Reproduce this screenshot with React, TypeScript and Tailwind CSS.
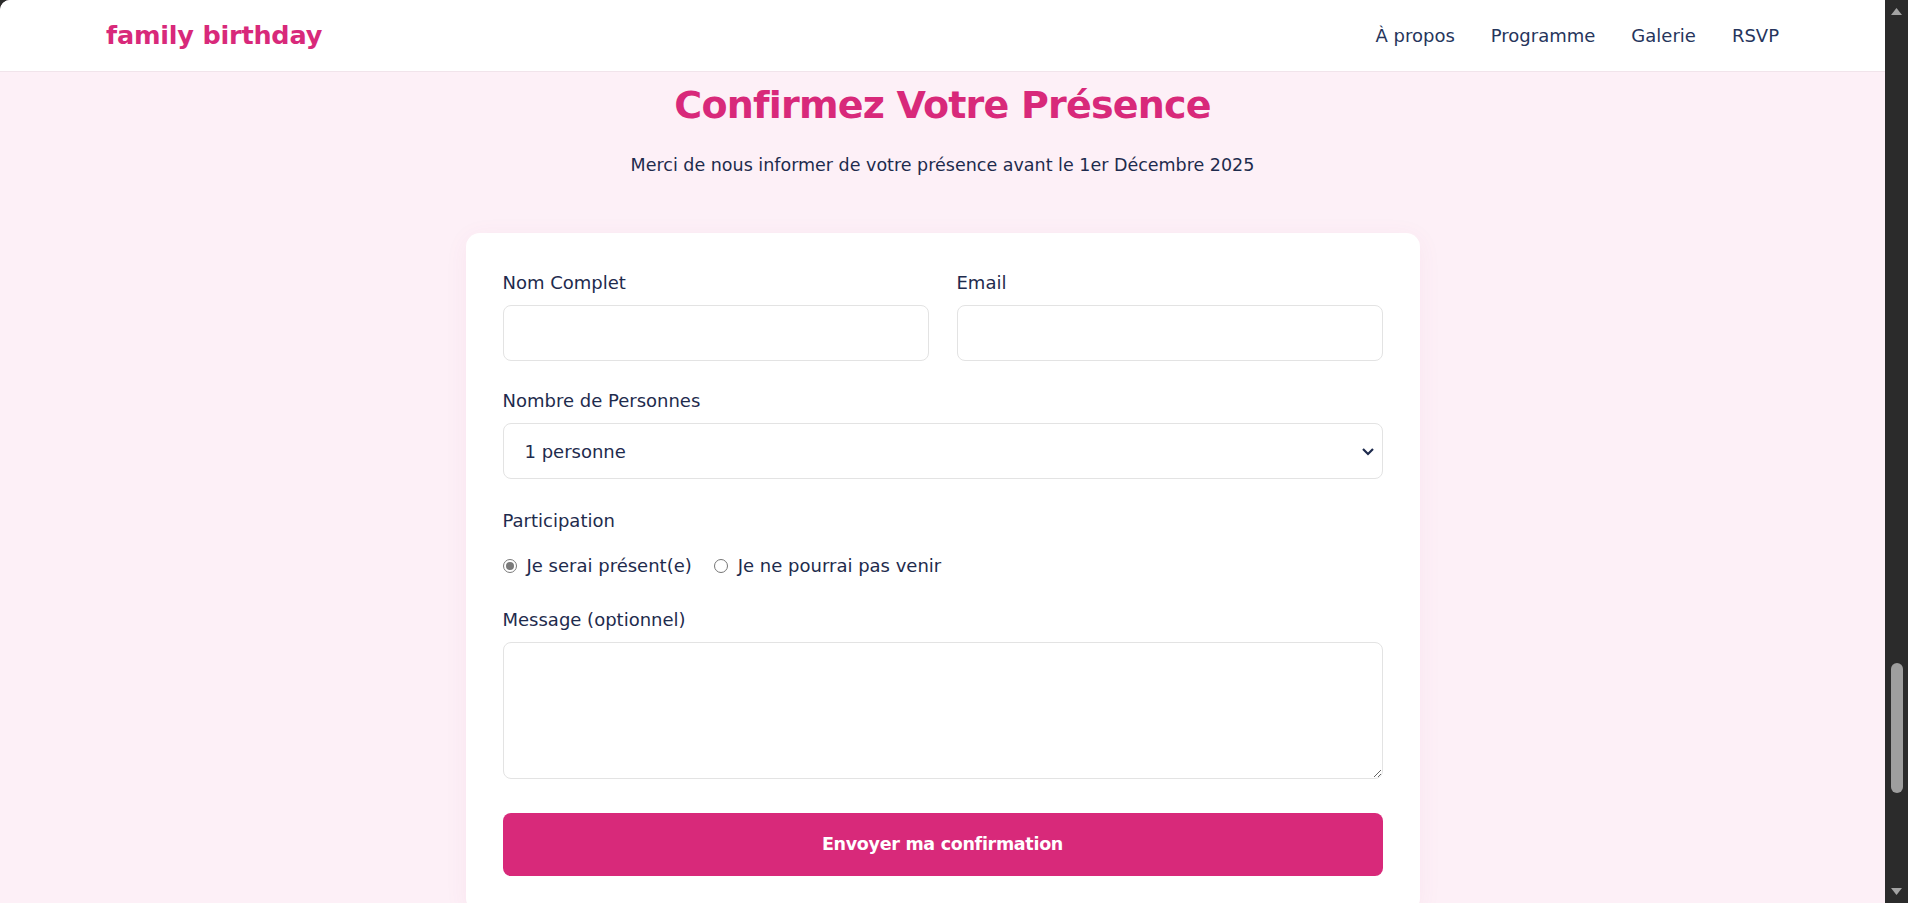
import React from "react";

const font = { fontFamily: '"DejaVu Sans", "Noto Sans", sans-serif' };

function Label({ children }: { children: React.ReactNode }) {
  return <div className="text-[18px] leading-6 text-[#1e2b4d] mb-[10px]">{children}</div>;
}

function Radio({ checked, label }: { checked: boolean; label: string }) {
  return (
    <label className="flex items-center">
      {checked ? (
        <span className="w-[14px] h-[14px] rounded-full border-[1.5px] border-[#7a7a7a] flex items-center justify-center">
          <span className="w-[8px] h-[8px] rounded-full bg-[#7a7a7a]" />
        </span>
      ) : (
        <span className="w-[14px] h-[14px] rounded-full border border-[#767676] bg-white" />
      )}
      <span className="ml-[10px] text-[18px] leading-6 text-[#1e2b4d]">{label}</span>
    </label>
  );
}

export default function App() {
  return (
    <div className="w-full h-[903px] overflow-hidden flex bg-[#2b2b2b]" style={font}>
      <div className="flex-1 flex flex-col bg-[#fdf0f7] rounded-tl-[10px] overflow-hidden">
        <header className="h-[72px] shrink-0 bg-white border-b border-[#f1e4eb] flex items-center justify-between px-[106px]">
          <div className="text-[25.5px] font-bold text-[#d8297a] tracking-[-0.2px]">family birthday</div>
          <nav className="flex items-center gap-9 text-[18px] text-[#26355c]">
            <a>À propos</a>
            <a>Programme</a>
            <a>Galerie</a>
            <a>RSVP</a>
          </nav>
        </header>
        <main className="flex-1 flex flex-col items-center pt-[11px]">
          <h1 className="text-[38px] leading-[44px] font-bold text-[#d8297a] tracking-[-0.8px]">
            Confirmez Votre Présence
          </h1>
          <p className="mt-[25px] text-[17.5px] leading-[26px] text-[#1e2b4d]">
            Merci de nous informer de votre présence avant le 1er Décembre 2025
          </p>
          <div className="mt-[55px] w-[954px] bg-white rounded-[14px] shadow-[0_4px_24px_rgba(180,60,120,0.06)] px-[37px] pt-[38px] pb-[36px]">
            <div className="grid grid-cols-2 gap-x-[28px]">
              <div>
                <Label>Nom Complet</Label>
                <input className="w-full h-[56px] rounded-[8px] border border-[#e3e3e3] bg-white outline-none px-4" />
              </div>
              <div>
                <Label>Email</Label>
                <input className="w-full h-[56px] rounded-[8px] border border-[#e3e3e3] bg-white outline-none px-4" />
              </div>
            </div>
            <div className="mt-[28px]">
              <Label>Nombre de Personnes</Label>
              <div className="h-[56px] rounded-[8px] border border-[#e3e3e3] bg-white flex items-center justify-between pl-[21px] pr-[6px]">
                <span className="text-[18px] text-[#1e2b4d]">1 personne</span>
                <svg width="14" height="9" viewBox="0 0 14 9" className="mr-[1px]">
                  <polyline points="2,2 7,7 12,2" fill="none" stroke="#1e2b4d" strokeWidth="2.2" />
                </svg>
              </div>
            </div>
            <div className="mt-[30px]">
              <div className="text-[18px] leading-6 text-[#1e2b4d]">Participation</div>
              <div className="mt-[21px] flex items-center gap-[22px]">
                <Radio checked label="Je serai présent(e)" />
                <Radio checked={false} label="Je ne pourrai pas venir" />
              </div>
            </div>
            <div className="mt-[30px]">
              <Label>Message (optionnel)</Label>
              <textarea className="block w-full h-[137px] rounded-[8px] border border-[#e3e3e3] bg-white outline-none p-4" />
            </div>
            <button className="mt-[34px] w-full h-[63px] rounded-[8px] bg-[#d8297a] text-white text-[17.5px] font-bold tracking-[-0.3px]">
              Envoyer ma confirmation
            </button>
          </div>
        </main>
      </div>
      <div className="w-[23px] shrink-0 bg-[#2b2b2b] flex flex-col items-center">
        <div className="h-[23px] flex items-center justify-center">
          <svg width="11" height="7" viewBox="0 0 11 7">
            <polygon points="0,7 5.5,0 11,7" fill="#a3a3a3" />
          </svg>
        </div>
        <div className="mt-[640px] w-[12px] h-[130px] rounded-full bg-[#9e9e9e]" />
        <div className="flex-1" />
        <div className="h-[23px] flex items-center justify-center">
          <svg width="11" height="7" viewBox="0 0 11 7">
            <polygon points="0,0 5.5,7 11,0" fill="#a3a3a3" />
          </svg>
        </div>
      </div>
    </div>
  );
}
